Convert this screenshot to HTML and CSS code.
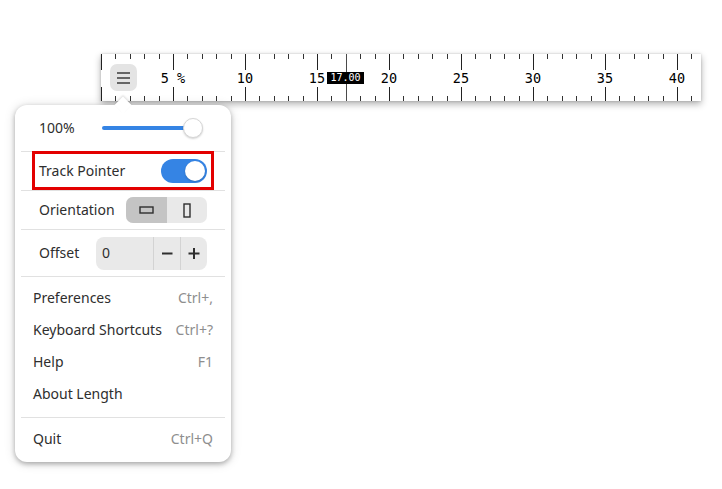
FILE: index.html
```html
<!DOCTYPE html>
<html lang="en">
<head>
<meta charset="utf-8">
<title>Length</title>
<link rel="stylesheet" href="styles.css">
</head>
<body>
<div class="desktop">
  <div class="ruler">
    <div class="labels">
      <span class="mark">5 %</span>
      <span class="mark">10</span>
      <span class="mark">15</span>
      <span class="mark">20</span>
      <span class="mark">25</span>
      <span class="mark">30</span>
      <span class="mark">35</span>
      <span class="mark">40</span>
    </div>
    <div class="pointer-line"></div>
    <div class="pointer-label">17.00</div>
    <button class="menu-btn" aria-label="Main menu">
      <span class="bar"></span><span class="bar"></span><span class="bar"></span>
    </button>
  </div>

  <div class="popover">
    <div class="row row-zoom">
      <span class="label">100%</span>
      <div class="slider"><div class="track"></div><div class="thumb"></div></div>
    </div>
    <div class="sep"></div>
    <div class="row row-std">
      <span class="label">Track Pointer</span>
      <div class="switch"><div class="knob"></div></div>
    </div>
    <div class="sep"></div>
    <div class="row row-std">
      <span class="label">Orientation</span>
      <div class="toggle">
        <div class="seg seg-on">
          <svg width="15" height="8" viewBox="0 0 15 8"><rect x="1" y="1" width="13" height="6" fill="none" stroke="#2e2e2e" stroke-width="1.4"/></svg>
        </div>
        <div class="seg">
          <svg width="8" height="15" viewBox="0 0 8 15"><rect x="1" y="1" width="6" height="13" fill="none" stroke="#2e2e2e" stroke-width="1.4"/></svg>
        </div>
      </div>
    </div>
    <div class="sep"></div>
    <div class="row row-offset">
      <span class="label">Offset</span>
      <div class="spin">
        <span class="spin-entry">0</span>
        <span class="spin-btn">
          <svg width="12" height="12" viewBox="0 0 12 12"><path d="M1 6.5H11.5" stroke="#2e2e2e" stroke-width="2"/></svg>
        </span>
        <span class="spin-btn">
          <svg width="12" height="12" viewBox="0 0 12 12"><path d="M0.5 6.5H11.5M6 1V12" stroke="#2e2e2e" stroke-width="2"/></svg>
        </span>
      </div>
    </div>
    <div class="sep"></div>
    <div class="menu-section">
      <div class="item"><span>Preferences</span><span class="accel">Ctrl+,</span></div>
      <div class="item"><span>Keyboard Shortcuts</span><span class="accel">Ctrl+?</span></div>
      <div class="item"><span>Help</span><span class="accel">F1</span></div>
      <div class="item"><span>About Length</span></div>
    </div>
    <div class="sep"></div>
    <div class="menu-section quit-section">
      <div class="item"><span>Quit</span><span class="accel">Ctrl+Q</span></div>
    </div>
    <div class="highlight"></div>
  </div>
  <div class="popover-arrow"></div>
</div>
</body>
</html>
```

FILE: styles.css
```css
html, body {
  margin: 0;
  padding: 0;
  background: #ffffff;
}

.desktop {
  position: relative;
  width: 722px;
  height: 489px;
  overflow: hidden;
  font-family: "Noto Sans", "Open Sans", sans-serif;
  color: #2e2e2e;
}

/* ---------- ruler window ---------- */
.ruler {
  position: absolute;
  left: 101px;
  top: 54px;
  width: 600px;
  height: 47px;
  background:
    repeating-linear-gradient(to right, #222 0 1px, transparent 1px 72px) left top / 100% 16px no-repeat,
    repeating-linear-gradient(to right, #222 0 1px, transparent 1px 72px) left bottom / 100% 14px no-repeat,
    repeating-linear-gradient(to right, #333 0 1px, transparent 1px 14.4px) left top / 100% 5px no-repeat,
    repeating-linear-gradient(to right, #333 0 1px, transparent 1px 14.4px) left bottom / 100% 5px no-repeat,
    #ffffff;
  box-shadow: 0 3px 7px rgba(0, 0, 0, 0.32), 0 0 2px rgba(0, 0, 0, 0.18);
}

.labels {
  display: flex;
  align-items: center;
  height: 100%;
  padding-left: 36px;
  font-family: "DejaVu Sans Mono", monospace;
  font-size: 13.5px;
  color: #000;
}

.mark {
  flex: 0 0 72px;
  text-align: center;
  white-space: pre;
}

.pointer-line {
  position: absolute;
  left: 245px;
  top: 0;
  width: 1px;
  height: 100%;
  background: #4a4a4a;
}

.pointer-label {
  position: absolute;
  left: 226px;
  top: 18px;
  width: 37px;
  height: 12px;
  background: #000;
  color: #fff;
  font-family: "DejaVu Sans Mono", monospace;
  font-size: 10px;
  line-height: 12px;
  text-align: center;
}

.menu-btn {
  position: absolute;
  left: 9px;
  top: 10px;
  width: 27px;
  height: 27px;
  padding: 0;
  border: none;
  border-radius: 7px;
  background: #e4e4e4;
  display: flex;
  flex-direction: column;
  align-items: center;
  justify-content: center;
  gap: 3px;
}

.bar {
  display: block;
  width: 13px;
  height: 2px;
  background: #666;
}

/* ---------- popover ---------- */
.popover {
  position: absolute;
  left: 15px;
  top: 105px;
  width: 216px;
  height: 357px;
  box-sizing: border-box;
  padding: 0 6px;
  background: #ffffff;
  border-radius: 12px;
  box-shadow: 0 2px 5px rgba(0, 0, 0, 0.28), 0 1px 12px rgba(0, 0, 0, 0.14);
  display: flex;
  flex-direction: column;
  font-size: 14px;
}

.popover-arrow {
  position: absolute;
  left: 117px;
  top: 99px;
  width: 12px;
  height: 12px;
  background: #ffffff;
  transform: rotate(45deg);
  box-shadow: -1px -1px 2px rgba(0, 0, 0, 0.12);
}

.sep {
  height: 1px;
  background: #e1e1e1;
  flex: 0 0 1px;
}

.row {
  display: flex;
  align-items: center;
  padding: 0 18px;
}

.label {
  margin-bottom: 2px;
}

.item span {
  margin-bottom: 1px;
}

.row-zoom { height: 46px; }
.row-std { height: 38px; }
.row-offset { height: 46px; }

.slider {
  position: relative;
  margin-left: auto;
  margin-right: 4px;
  width: 101px;
  height: 22px;
}

.track {
  position: absolute;
  left: 0;
  top: 9px;
  width: 92px;
  height: 4px;
  border-radius: 2px;
  background: #3584e4;
}

.thumb {
  position: absolute;
  right: 0;
  top: 1px;
  width: 20px;
  height: 20px;
  box-sizing: border-box;
  border-radius: 50%;
  background: #fff;
  border: 1px solid #d6d6d6;
  box-shadow: 0 1px 2px rgba(0, 0, 0, 0.18);
}

.switch {
  margin-left: auto;
  width: 46px;
  height: 24px;
  border-radius: 12px;
  background: #3584e4;
  display: flex;
  align-items: center;
  justify-content: flex-end;
  padding: 0 2px;
  box-sizing: border-box;
}

.knob {
  width: 20px;
  height: 20px;
  border-radius: 50%;
  background: #fff;
  box-shadow: 0 1px 2px rgba(0, 0, 0, 0.2);
}

.toggle {
  margin-left: auto;
  display: flex;
  width: 81px;
  height: 26px;
  border-radius: 7px;
  overflow: hidden;
  background: #e9e9e9;
}

.seg {
  flex: 1 1 0;
  display: flex;
  align-items: center;
  justify-content: center;
}

.seg-on {
  background: #c4c4c4;
}

.spin {
  margin-left: auto;
  display: flex;
  width: 111px;
  height: 33px;
  border-radius: 8px;
  background: #e9e9e9;
  overflow: hidden;
}

.spin-entry {
  flex: 1 1 auto;
  display: flex;
  align-items: center;
  padding-left: 6px;
  padding-bottom: 2px;
}

.spin-btn {
  flex: 0 0 26px;
  display: flex;
  align-items: center;
  justify-content: center;
  border-left: 1px solid #d3d3d3;
}

.menu-section {
  display: flex;
  flex-direction: column;
  padding: 5px 0 7px;
}

.item {
  height: 32px;
  display: flex;
  align-items: center;
  justify-content: space-between;
  padding: 0 12px;
}

.accel {
  color: #8e8e8e;
}

.highlight {
  position: absolute;
  left: 17px;
  top: 46px;
  width: 182px;
  height: 39px;
  box-sizing: border-box;
  border: 3px solid #e30000;
}
```
